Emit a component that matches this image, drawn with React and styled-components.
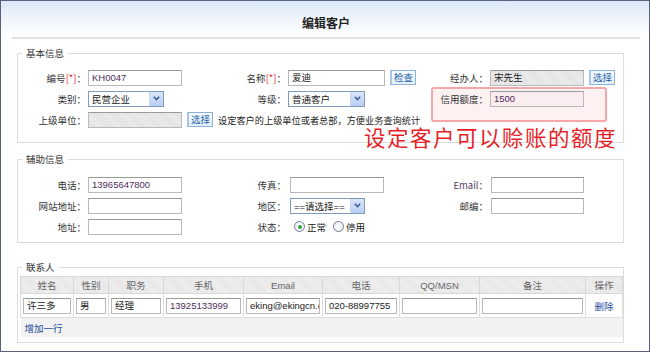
import React from "react";
import styled, { createGlobalStyle } from "styled-components";

const Global = createGlobalStyle`
  html, body { margin: 0; padding: 0; background: #fff; }
  body {
    font-family: "Liberation Sans", "Noto Sans CJK SC", sans-serif;
    font-size: 9.5px;
    color: #333;
  }
`;

const Frame = styled.div`
  width: 650px;
  height: 352px;
  box-sizing: border-box;
  border: 1px solid #59607a;
  background: #fff;
  overflow: hidden;
`;

const Header = styled.div`
  height: 36px;
  background: linear-gradient(#d9e7f7 0%, #eef4fb 45%, #ffffff 100%);
`;

const TitleBar = styled.div`
  margin: 0 9px 0 11px;
  border-bottom: 2px solid #e2e2e2;
  display: flex;
  align-items: center;
  justify-content: center;
  padding-top: 6px;
  height: 30px;
  font-family: "Noto Sans CJK SC", sans-serif;
  font-size: 12px;
  font-weight: 700;
  color: #222;
`;

const Fieldset = styled.fieldset`
  margin: ${(p) => p.$top}px 25px 0 16px;
  padding: ${(p) => p.$pt}px 0 ${(p) => p.$pb}px 0;
  border: 1px solid #dcdcdc;
  min-width: 0;
`;

const Legend = styled.legend`
  margin-left: 4px;
  padding: 0 4px;
  line-height: 16px;
  font-family: "Noto Sans CJK SC", sans-serif;
  font-size: 9.5px;
  color: #333;
`;

const Grid = styled.div`
  position: relative;
  isolation: isolate;
  display: grid;
  grid-template-columns: 70px 128px 72px 130px 72px 1fr;
  grid-auto-rows: 21px;
  align-items: center;
`;

const Label = styled.div`
  text-align: right;
  padding-right: 2px;
  white-space: nowrap;
  font-family: "Noto Sans CJK SC", sans-serif;
  font-size: 9.5px;
  color: ${(p) => (p.$purple ? "#5a3a63" : "#333")};
`;

const Star = styled.span`
  color: #e02020;
`;

const Cell = styled.div`
  display: flex;
  align-items: center;
  gap: 5px;
  grid-column: ${(p) => p.$span || "auto"};
  padding-left: ${(p) => p.$pl || 0}px;
  white-space: nowrap;
`;

const Input = styled.div`
  box-sizing: border-box;
  width: ${(p) => p.$w || 94}px;
  height: 16px;
  border: 1px solid #b9b9b9;
  border-top-color: #999;
  background: ${(p) =>
    p.$grey
      ? "repeating-linear-gradient(45deg, #e2e2e2 0 1px, #ececec 1px 2px)"
      : p.$pink
      ? "#fbecef"
      : "#fff"};
  padding: 0 3px;
  line-height: 14px;
  font-size: 9.5px;
  color: ${(p) => (p.$ink ? p.$ink : "#222")};
  font-family: "Liberation Sans", "Noto Sans CJK SC", sans-serif;
  overflow: hidden;
  white-space: nowrap;
`;

const Button = styled.div`
  box-sizing: border-box;
  height: 15px;
  padding: 0 2px;
  border: 1px solid #8db2d8;
  border-left: 2px solid #a9c6e4;
  background: linear-gradient(#f6fbff, #e4eff9);
  color: #1d5ea8;
  font-family: "Noto Sans CJK SC", sans-serif;
  font-size: 9.5px;
  line-height: 13px;
`;

const Hint = styled.span`
  font-family: "Noto Sans CJK SC", sans-serif;
  font-size: 9.2px;
  line-height: 12px;
  color: #222;
`;

const SelectBox = styled.div`
  box-sizing: border-box;
  width: ${(p) => p.$w || 76}px;
  height: 16px;
  border: 1px solid #7f9db9;
  background: #fff;
  display: flex;
  align-items: center;
  justify-content: space-between;
  padding-left: 3px;
  font-family: "Liberation Sans", "Noto Sans CJK SC", sans-serif;
  font-size: 9.5px;
  color: #222;
`;

const Arrow = styled.span`
  width: 13px;
  height: 14px;
  background: linear-gradient(#dbe6fb, #b9cdf5);
  border-left: 1px solid #c8d6f0;
  display: flex;
  align-items: center;
  justify-content: center;
`;

const Select = ({ w, children }) => (
  <SelectBox $w={w}>
    <span>{children}</span>
    <Arrow>
      <svg width="7" height="5" viewBox="0 0 7 5">
        <path d="M0.8 0.8 L3.5 3.6 L6.2 0.8" fill="none" stroke="#3a5d9c" strokeWidth="1.5" />
      </svg>
    </Arrow>
  </SelectBox>
);

const RadioDot = styled.span`
  box-sizing: border-box;
  width: 11px;
  height: 11px;
  border-radius: 50%;
  border: 1px solid #6f7f99;
  background: radial-gradient(circle, #ffffff 0, #e6e9ee 100%);
  display: inline-flex;
  align-items: center;
  justify-content: center;
  &::after {
    content: "";
    width: 4px;
    height: 4px;
    border-radius: 50%;
    background: ${(p) => (p.$on ? "#2ea43a" : "transparent")};
  }
`;

const RadioLabel = styled.span`
  display: inline-flex;
  align-items: center;
  gap: 2px;
  margin-left: 2px;
  font-family: "Noto Sans CJK SC", sans-serif;
  font-size: 9.5px;
  color: #222;
`;

/* annotation drawn over the form: pink box round the credit field */
const Highlight = styled.div`
  position: absolute;
  z-index: -1;
  left: 413px;
  top: 20px;
  width: 176px;
  height: 35px;
  box-sizing: border-box;
  border: 2px solid #f4a7a9;
  border-radius: 3px;
  background: #fdf1f2;
`;

const Note = styled.div`
  position: absolute;
  left: 346px;
  top: 59px;
  z-index: 2;
  font-family: "Noto Sans CJK SC", sans-serif;
  font-size: 21.5px;
  letter-spacing: 1.5px;
  line-height: 21px;
  color: #e51f29;
  white-space: nowrap;
`;

const Table = styled.table`
  border-collapse: collapse;
  margin-left: 2px;
  table-layout: fixed;
  width: 602px;
`;

const Th = styled.th`
  height: 16px;
  padding: 0;
  border: 1px solid #d8d8d8;
  background: repeating-linear-gradient(45deg, #e6e6e6 0 1px, #efefef 1px 2px);
  font-family: "Liberation Sans", "Noto Sans CJK SC", sans-serif;
  font-weight: 400;
  font-size: 9.5px;
  color: #666;
`;

const Td = styled.td`
  height: 23px;
  padding: 0 2px;
  border: 1px solid #dedede;
  background: #fff;
  text-align: center;
`;

const CellInput = styled(Input)`
  width: 100%;
  text-align: left;
  text-overflow: clip;
`;

const LinkText = styled.span`
  font-family: "Noto Sans CJK SC", sans-serif;
  font-size: 9.5px;
  color: #1f4e9a;
`;

const AddRow = styled.td`
  height: 19px;
  padding: 0 4px;
  background: #f2f2f2;
  border: none;
  text-align: left;
`;

const cols = [53, 35, 55, 80, 79, 77, 80, 106, 37];
const heads = ["姓名", "性别", "职务", "手机", "Email", "电话", "QQ/MSN", "备注", "操作"];
const contact = ["许三多", "男", "经理", "13925133999", "eking@ekingcn.c", "020-88997755", "", ""];
const purple = "#4e2d5c";

export default function App() {
  return (
    <Frame>
      <Global />
      <Header>
        <TitleBar>编辑客户</TitleBar>
      </Header>

      <Fieldset $top={8} $pt={6} $pb={12}>
        <Legend>基本信息</Legend>
        <Grid>
          <Label>编号<Star>[*]</Star>：</Label>
          <Cell><Input $ink={purple}>KH0047</Input></Cell>
          <Label>名称<Star>[*]</Star>：</Label>
          <Cell><Input $w={97}>爱迪</Input><Button>检查</Button></Cell>
          <Label>经办人：</Label>
          <Cell><Input $grey>宋先生</Input><Button>选择</Button></Cell>

          <Label>类别：</Label>
          <Cell><Select>民营企业</Select></Cell>
          <Label>等级：</Label>
          <Cell><Select w={77}>普通客户</Select></Cell>
          <Label>信用额度：</Label>
          <Cell><Input $pink $ink={purple}>1500</Input></Cell>

          <Label>上级单位：</Label>
          <Cell $span="2 / -1">
            <Input $grey />
            <Button>选择</Button>
            <Hint>设定客户的上级单位或者总部，方便业务查询统计</Hint>
          </Cell>

          <Highlight />
          <Note>设定客户可以赊账的额度</Note>
        </Grid>
      </Fieldset>

      <Fieldset $top={8} $pt={7} $pb={5}>
        <Legend>辅助信息</Legend>
        <Grid>
          <Label>电话：</Label>
          <Cell><Input $ink={purple}>13965647800</Input></Cell>
          <Label>传真：</Label>
          <Cell $pl={2}><Input /></Cell>
          <Label $purple>Email：</Label>
          <Cell $pl={1}><Input $w={93} /></Cell>

          <Label>网站地址：</Label>
          <Cell><Input /></Cell>
          <Label>地区：</Label>
          <Cell $pl={2}><Select w={75}>==请选择==</Select></Cell>
          <Label>邮编：</Label>
          <Cell $pl={1}><Input $w={93} /></Cell>

          <Label>地址：</Label>
          <Cell><Input /></Cell>
          <Label>状态：</Label>
          <Cell $pl={4}>
            <RadioLabel><RadioDot $on />正常</RadioLabel>
            <RadioLabel><RadioDot />停用</RadioLabel>
          </Cell>
        </Grid>
      </Fieldset>

      <Fieldset $top={16} $pt={1} $pb={5}>
        <Legend>联系人</Legend>
        <Table>
          <colgroup>
            {cols.map((w, i) => (
              <col key={i} style={{ width: w }} />
            ))}
          </colgroup>
          <thead>
            <tr>
              {heads.map((h) => (
                <Th key={h}>{h}</Th>
              ))}
            </tr>
          </thead>
          <tbody>
            <tr>
              {contact.map((v, i) => (
                <Td key={i}>
                  <CellInput $ink={i === 3 ? purple : "#222"}>{v}</CellInput>
                </Td>
              ))}
              <Td><LinkText>删除</LinkText></Td>
            </tr>
            <tr>
              <AddRow colSpan={9}><LinkText>增加一行</LinkText></AddRow>
            </tr>
          </tbody>
        </Table>
      </Fieldset>
    </Frame>
  );
}
